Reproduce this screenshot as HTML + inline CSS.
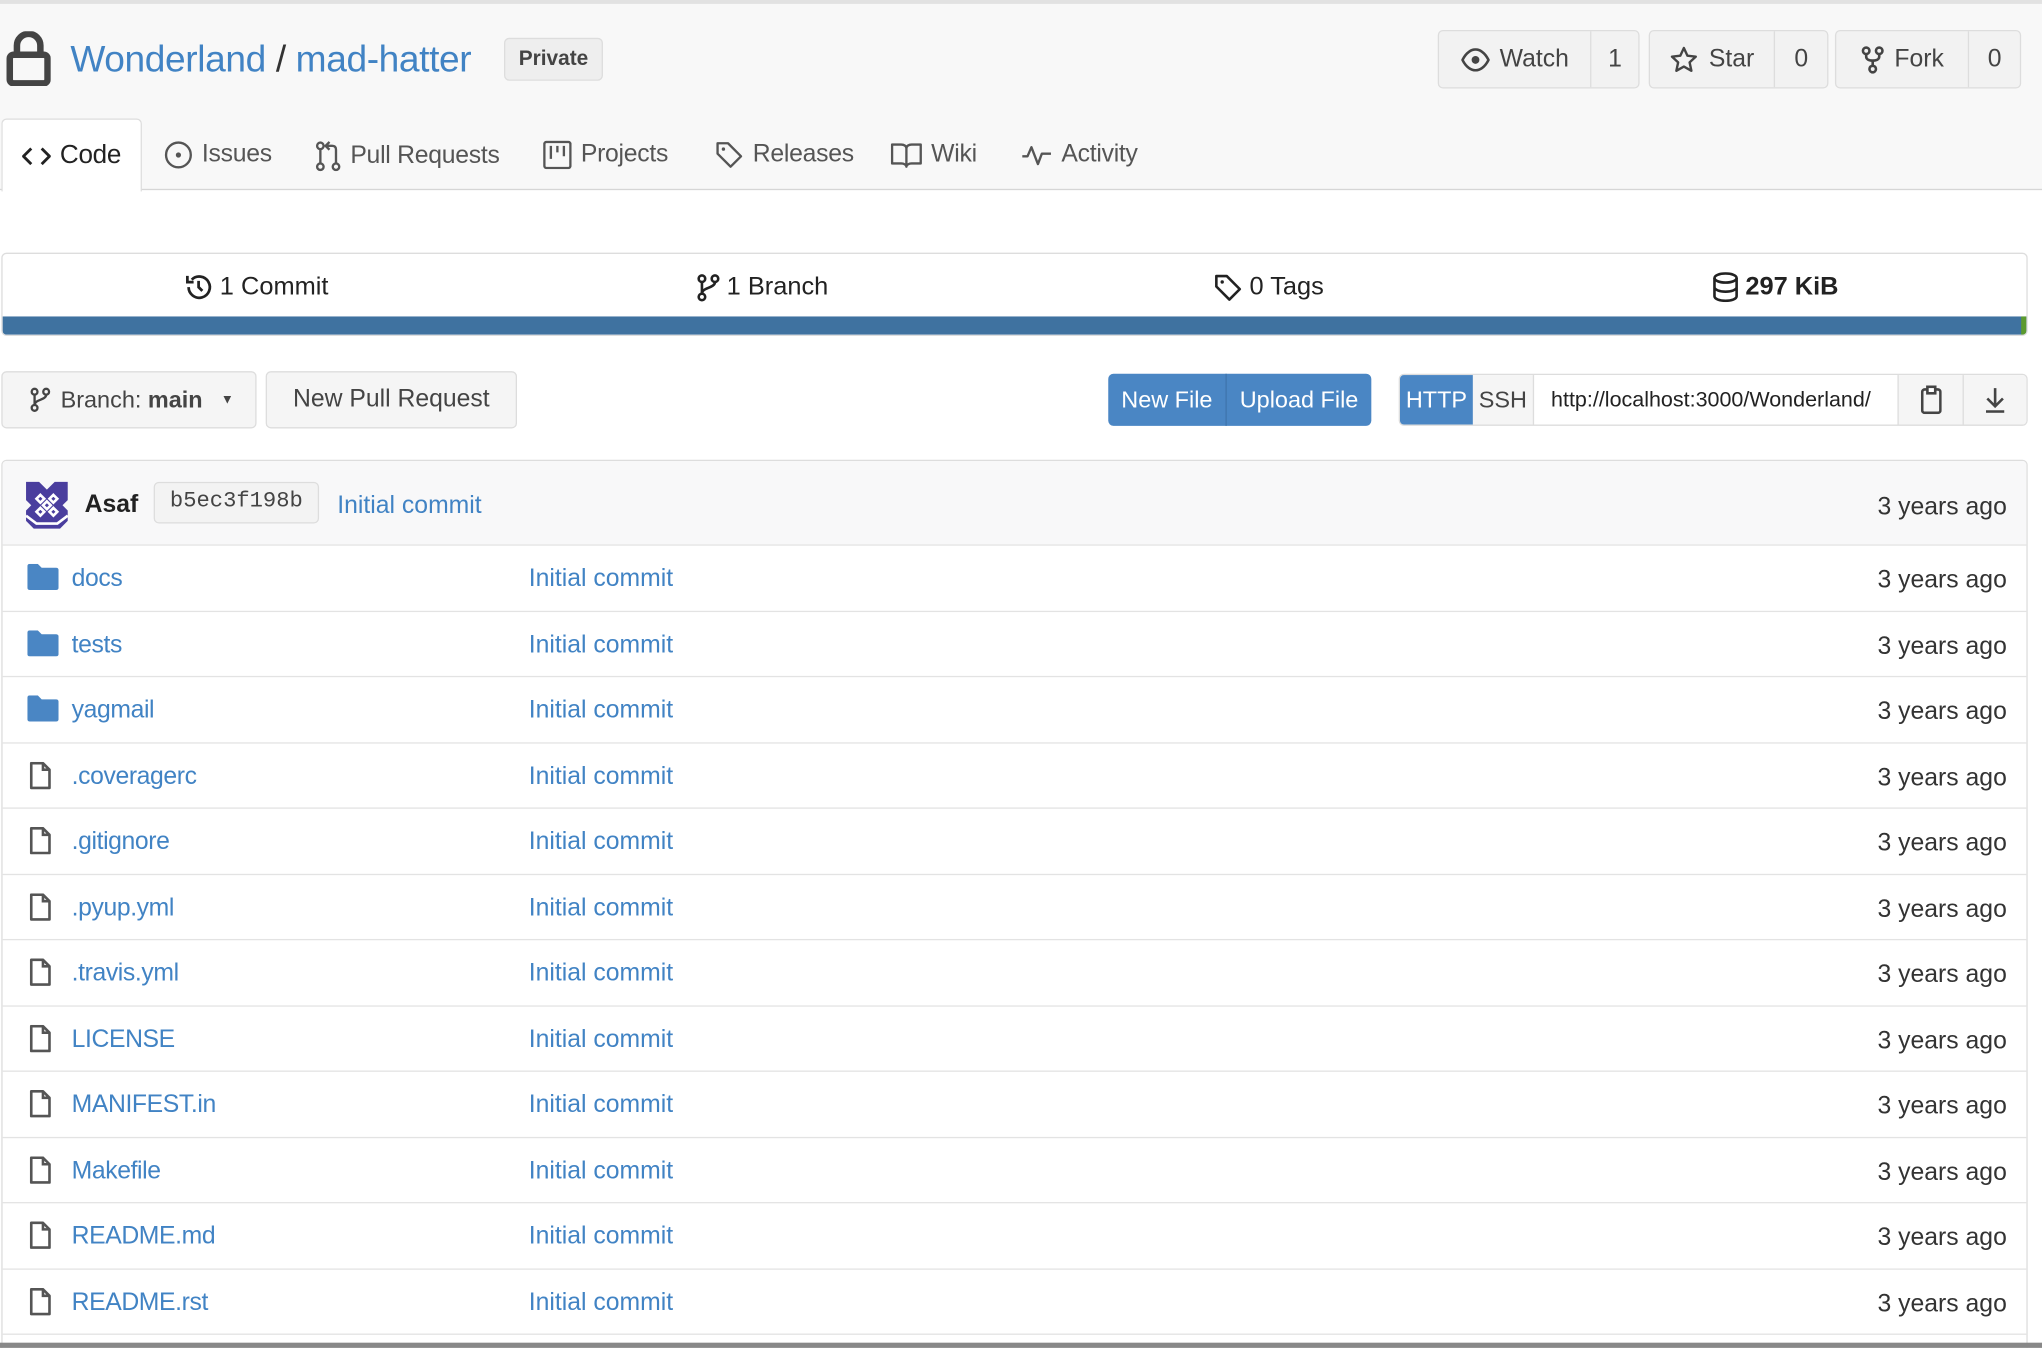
<!DOCTYPE html>
<html><head><meta charset="utf-8">
<style>
*{box-sizing:border-box;margin:0;padding:0}
html,body{width:2042px;height:1348px;overflow:hidden;background:#fff}
#w{width:1568px;height:1035px;transform:scale(1.30230);transform-origin:0 0;position:relative;font-family:"Liberation Sans",sans-serif;color:#333}
.abs{position:absolute}
.hdr{left:0;top:0;width:1568px;height:146px;background:#f8f8f8;border-top:3px solid #e2e2e2;border-bottom:1px solid #d6d6d6}
.title{left:54px;top:30px;font-size:28.5px;color:#4183c4;white-space:nowrap;letter-spacing:-0.3px}
.badge{left:387px;top:29px;width:76px;height:33px;border:1px solid #ddd;border-radius:4px;background:#eee;font-size:16px;font-weight:bold;color:#444;text-align:center;line-height:31px}
.btng{top:23px;height:45px;border:1px solid #ddd;border-radius:4px;background:#f2f2f2;display:flex;font-size:19px;color:#444}
.btng div{display:flex;align-items:center;justify-content:center}
.btng .c{border-left:1px solid #ddd}
.tab{top:108px;font-size:19px;color:#555;display:flex;align-items:center;gap:7px;white-space:nowrap;letter-spacing:-0.2px}
.code{left:1px;top:91px;width:108px;height:56px;background:#fff;border:1px solid #ddd;border-bottom:none;border-radius:4px 4px 0 0}
.stats{left:1px;top:194px;width:1556px;height:64px;border:1px solid #ddd;border-radius:4px;background:#fff;overflow:hidden}
.stats .it{position:absolute;top:14px;width:389px;text-align:center;font-size:19.5px;color:#222;display:flex;justify-content:center;align-items:center;gap:5px}
.bar{position:absolute;left:0;bottom:0;height:14px;width:100%;background:#3f72a0;border-right:4px solid #5b9a2e}
.btn{border:1px solid #ddd;border-radius:4px;background:#f5f5f5;font-size:19px;color:#444;display:flex;align-items:center;justify-content:center;white-space:nowrap}
.tbl{left:1px;top:353px;width:1556px;height:690px;border:1px solid #ddd;border-radius:4px;overflow:hidden}
.row{position:absolute;left:0;width:100%;height:51px;border-top:1px solid #e3e3e3;font-size:19px}
.row .ic{position:absolute;left:19px;top:14px}
.row .n{position:absolute;left:53px;top:15px;color:#4183c4;letter-spacing:-0.3px}
.row .m{position:absolute;left:404px;top:15px;color:#4183c4}
.row .t{position:absolute;right:15px;top:16px;color:#333}
</style></head><body><div id="w">
<div class="abs hdr"></div>
<svg class="abs" style="left:5px;top:24px" width="34" height="42" viewBox="0 0 34 42"><rect x="2.5" y="18" width="29" height="22" rx="3" fill="none" stroke="#444" stroke-width="5"/><path d="M8 19V11a9 9 0 0 1 18 0v8" fill="none" stroke="#444" stroke-width="5"/></svg>
<div class="abs title">Wonderland<span style="color:#333"> / </span>mad-hatter</div>
<div class="abs badge">Private</div>
<div class="abs btng" style="left:1104px;width:155px"><div style="width:117px;gap:8px"><svg width="22" height="18" viewBox="0 0 22 18"><path d="M1 9C4 3 8 1 11 1s7 2 10 8c-3 6-7 8-10 8S4 15 1 9z" fill="none" stroke="#444" stroke-width="2"/><circle cx="11" cy="9" r="3" fill="#444"/></svg>Watch</div><div class="c" style="width:37px">1</div></div>
<div class="abs btng" style="left:1266px;width:138px"><div style="width:96px;gap:8px"><svg width="22" height="22" viewBox="0 0 24 24"><path d="M12 2l3 6.5 7 .8-5.2 4.8 1.5 7L12 17.6 5.7 21.1l1.5-7L2 9.3l7-.8z" fill="none" stroke="#444" stroke-width="2" stroke-linejoin="round"/></svg>Star</div><div class="c" style="width:41px">0</div></div>
<div class="abs btng" style="left:1409px;width:143px"><div style="width:102px;gap:8px"><svg width="18" height="22" viewBox="0 0 18 22"><circle cx="4" cy="4" r="2.5" fill="none" stroke="#444" stroke-width="2"/><circle cx="14" cy="4" r="2.5" fill="none" stroke="#444" stroke-width="2"/><circle cx="9" cy="18" r="2.5" fill="none" stroke="#444" stroke-width="2"/><path d="M4 6.5v2c0 2 2 3 5 3s5-1 5-3v-2M9 11.5v4" fill="none" stroke="#444" stroke-width="2"/></svg>Fork</div><div class="c" style="width:40px">0</div></div>

<div class="abs code"></div>
<div class="abs tab" style="left:17px;color:#222"><svg width="22" height="16" viewBox="0 0 22 16"><path d="M7 2L1 8l6 6M15 2l6 6-6 6" fill="none" stroke="#222" stroke-width="2.2"/></svg><span style="font-size:20px">Code</span></div>
<div class="abs tab" style="left:126px"><svg width="22" height="22" viewBox="0 0 22 22"><circle cx="11" cy="11" r="9.5" fill="none" stroke="#555" stroke-width="1.8"/><circle cx="11" cy="11" r="2" fill="#555"/></svg>Issues</div>
<div class="abs tab" style="left:242px"><svg width="20" height="24" viewBox="0 0 20 24"><circle cx="4" cy="4" r="2.5" fill="none" stroke="#555" stroke-width="1.8"/><circle cx="4" cy="20" r="2.5" fill="none" stroke="#555" stroke-width="1.8"/><circle cx="16" cy="20" r="2.5" fill="none" stroke="#555" stroke-width="1.8"/><path d="M4 6.5v11M16 17.5V7c0-2-1-3-3-3H9m2-3L8 4l3 3" fill="none" stroke="#555" stroke-width="1.8"/></svg>Pull Requests</div>
<div class="abs tab" style="left:417px"><svg width="22" height="22" viewBox="0 0 22 22"><rect x="1" y="1" width="20" height="20" rx="1.5" fill="none" stroke="#555" stroke-width="1.8"/><path d="M6 4v10M11 4v5M16 4v8" stroke="#555" stroke-width="1.8"/></svg>Projects</div>
<div class="abs tab" style="left:549px"><svg width="22" height="22" viewBox="0 0 22 22"><path d="M2 2h8l10 10-8 8L2 10z" fill="none" stroke="#555" stroke-width="1.8" stroke-linejoin="round"/><circle cx="6.5" cy="6.5" r="1.3" fill="#555"/></svg>Releases</div>
<div class="abs tab" style="left:684px"><svg width="24" height="20" viewBox="0 0 24 20"><path d="M1 2h7c2 0 4 1 4 3v14c0-1.5-2-2.5-4-2.5H1zM23 2h-7c-2 0-4 1-4 3v14c0-1.5 2-2.5 4-2.5h7z" fill="none" stroke="#555" stroke-width="1.8" stroke-linejoin="round"/></svg>Wiki</div>
<div class="abs tab" style="left:784px"><svg width="24" height="20" viewBox="0 0 24 20"><path d="M1 11h4l3-7 5 13 3-8h7" fill="none" stroke="#555" stroke-width="1.8" stroke-linejoin="round"/></svg>Activity</div>

<div class="abs stats">
<div class="it" style="left:0"><svg width="23" height="23" viewBox="0 0 24 24"><path d="M4 12a8.5 8.5 0 1 0 2.5-6" fill="none" stroke="#222" stroke-width="2.2"/><path d="M3 3v5h5" fill="none" stroke="#222" stroke-width="2.2"/><path d="M12 7v5l3 3" fill="none" stroke="#222" stroke-width="2.2"/></svg>1 Commit</div>
<div class="it" style="left:389px"><svg width="18" height="22" viewBox="0 0 18 22"><circle cx="4" cy="4" r="2.5" fill="none" stroke="#222" stroke-width="2"/><circle cx="14" cy="4" r="2.5" fill="none" stroke="#222" stroke-width="2"/><circle cx="4" cy="18" r="2.5" fill="none" stroke="#222" stroke-width="2"/><path d="M4 6.5v9M14 6.5c0 5-10 4-10 9" fill="none" stroke="#222" stroke-width="2"/></svg>1 Branch</div>
<div class="it" style="left:778px"><svg width="22" height="22" viewBox="0 0 22 22"><path d="M2 2h8l10 10-8 8L2 10z" fill="none" stroke="#222" stroke-width="2" stroke-linejoin="round"/><circle cx="6.5" cy="6.5" r="1.3" fill="#222"/></svg>0 Tags</div>
<div class="it" style="left:1167px;font-weight:bold"><svg width="20" height="23" viewBox="0 0 20 23"><ellipse cx="10" cy="4.5" rx="8.5" ry="3.5" fill="none" stroke="#222" stroke-width="2"/><path d="M1.5 4.5v14c0 2 4 3.5 8.5 3.5s8.5-1.5 8.5-3.5v-14M1.5 11.5c0 2 4 3.5 8.5 3.5s8.5-1.5 8.5-3.5" fill="none" stroke="#222" stroke-width="2"/></svg>297 KiB</div>
<div class="bar"></div>
</div>

<div class="abs btn" style="left:1px;top:285px;width:196px;height:44px;gap:8px;font-size:18px;padding-left:4px"><svg width="16" height="22" viewBox="0 0 18 22"><circle cx="4" cy="4" r="2.5" fill="none" stroke="#444" stroke-width="2"/><circle cx="14" cy="4" r="2.5" fill="none" stroke="#444" stroke-width="2"/><circle cx="4" cy="18" r="2.5" fill="none" stroke="#444" stroke-width="2"/><path d="M4 6.5v9M14 6.5c0 5-10 4-10 9" fill="none" stroke="#444" stroke-width="2"/></svg><span>Branch: <b>main</b></span><span style="font-size:10px;margin-left:6px">▼</span></div>
<div class="abs btn" style="left:204px;top:285px;width:193px;height:44px">New Pull Request</div>
<div class="abs" style="left:851px;top:287px;width:202px;height:40px;background:#4a86c4;border-radius:4px;display:flex;color:#fff;font-size:18px"><div style="width:91px;display:flex;align-items:center;justify-content:center;border-right:1px solid #3f75ad">New File</div><div style="flex:1;display:flex;align-items:center;justify-content:center">Upload File</div></div>
<div class="abs" style="left:1074px;top:287px;width:483px;height:40px;border:1px solid #ddd;border-radius:4px;display:flex;font-size:18px;overflow:hidden">
<div style="width:56px;background:#4a86c4;color:#fff;display:flex;align-items:center;justify-content:center">HTTP</div>
<div style="width:47px;background:#f5f5f5;color:#444;display:flex;align-items:center;justify-content:center;border-right:1px solid #ddd">SSH</div>
<div style="width:279px;color:#222;display:flex;align-items:center;padding-left:13px;font-size:16.5px;white-space:nowrap;overflow:hidden">http://localhost:3000/Wonderland/</div>
<div style="width:50px;background:#f5f5f5;border-left:1px solid #ddd;display:flex;align-items:center;justify-content:center"><svg width="16" height="22" viewBox="0 0 16 22"><rect x="1" y="3" width="14" height="18" rx="2" fill="none" stroke="#444" stroke-width="2"/><rect x="5" y="1" width="6" height="5" fill="#fff" stroke="#444" stroke-width="2"/></svg></div>
<div style="flex:1;background:#f5f5f5;border-left:1px solid #ddd;display:flex;align-items:center;justify-content:center"><svg width="16" height="20" viewBox="0 0 16 20"><path d="M8 1v13M2 9l6 6 6-6M1 19h14" fill="none" stroke="#444" stroke-width="2"/></svg></div>
</div>

<div class="abs tbl">
<div style="position:absolute;left:0;top:0;width:100%;height:64px;background:#f8f8f9"></div>
<svg style="position:absolute;left:14px;top:12px" width="40" height="40" viewBox="0 0 40 40"><path d="M4 4h10l6 6 6-6h10v14l-4 4 4 4v8l-6 6H10l-6-6v-8l4-4-4-4z" fill="#4a3e9e"/><g fill="none" stroke="#fff" stroke-width="2"><path d="M15 14l3 3-3 3-3-3zM25 14l3 3-3 3-3-3zM20 19l3 3-3 3-3-3zM15 24l3 3-3 3-3-3zM25 24l3 3-3 3-3-3z"/></g><path d="M4 30l8 6h16l8-6" fill="none" stroke="#fff" stroke-width="2"/></svg>
<div style="position:absolute;left:63px;top:23px;font-size:19px;font-weight:bold;color:#222">Asaf</div>
<div style="position:absolute;left:116px;top:16px;width:127px;height:32px;border:1px solid #ddd;border-radius:4px;background:#f3f3f3;font-family:'Liberation Mono',monospace;font-size:17px;color:#444;text-align:center;line-height:30px">b5ec3f198b</div>
<div style="position:absolute;left:257px;top:24px;font-size:19px;color:#4183c4">Initial commit</div>
<div style="position:absolute;right:15px;top:25px;font-size:19px;color:#333">3 years ago</div>

<div class="row" style="top:64px"><svg class="ic" width="24" height="20" viewBox="0 0 24 20"><path d="M0 2q0-2 2-2h6l3 3h11q2 0 2 2v13q0 2-2 2H2q-2 0-2-2z" fill="#4a86c4"/></svg><span class="n">docs</span><span class="m">Initial commit</span><span class="t">3 years ago</span></div>
<div class="row" style="top:114.5px"><svg class="ic" width="24" height="20" viewBox="0 0 24 20"><path d="M0 2q0-2 2-2h6l3 3h11q2 0 2 2v13q0 2-2 2H2q-2 0-2-2z" fill="#4a86c4"/></svg><span class="n">tests</span><span class="m">Initial commit</span><span class="t">3 years ago</span></div>
<div class="row" style="top:165px"><svg class="ic" width="24" height="20" viewBox="0 0 24 20"><path d="M0 2q0-2 2-2h6l3 3h11q2 0 2 2v13q0 2-2 2H2q-2 0-2-2z" fill="#4a86c4"/></svg><span class="n">yagmail</span><span class="m">Initial commit</span><span class="t">3 years ago</span></div>
<div class="row" style="top:215.5px"><svg class="ic" width="20" height="22" viewBox="0 0 20 22"><path d="M3 1h9l5 5v14H3z" fill="none" stroke="#555" stroke-width="2" stroke-linejoin="round"/><path d="M12 1v5h5" fill="none" stroke="#555" stroke-width="2"/></svg><span class="n">.coveragerc</span><span class="m">Initial commit</span><span class="t">3 years ago</span></div>
<div class="row" style="top:266px"><svg class="ic" width="20" height="22" viewBox="0 0 20 22"><path d="M3 1h9l5 5v14H3z" fill="none" stroke="#555" stroke-width="2" stroke-linejoin="round"/><path d="M12 1v5h5" fill="none" stroke="#555" stroke-width="2"/></svg><span class="n">.gitignore</span><span class="m">Initial commit</span><span class="t">3 years ago</span></div>
<div class="row" style="top:316.5px"><svg class="ic" width="20" height="22" viewBox="0 0 20 22"><path d="M3 1h9l5 5v14H3z" fill="none" stroke="#555" stroke-width="2" stroke-linejoin="round"/><path d="M12 1v5h5" fill="none" stroke="#555" stroke-width="2"/></svg><span class="n">.pyup.yml</span><span class="m">Initial commit</span><span class="t">3 years ago</span></div>
<div class="row" style="top:367px"><svg class="ic" width="20" height="22" viewBox="0 0 20 22"><path d="M3 1h9l5 5v14H3z" fill="none" stroke="#555" stroke-width="2" stroke-linejoin="round"/><path d="M12 1v5h5" fill="none" stroke="#555" stroke-width="2"/></svg><span class="n">.travis.yml</span><span class="m">Initial commit</span><span class="t">3 years ago</span></div>
<div class="row" style="top:417.5px"><svg class="ic" width="20" height="22" viewBox="0 0 20 22"><path d="M3 1h9l5 5v14H3z" fill="none" stroke="#555" stroke-width="2" stroke-linejoin="round"/><path d="M12 1v5h5" fill="none" stroke="#555" stroke-width="2"/></svg><span class="n">LICENSE</span><span class="m">Initial commit</span><span class="t">3 years ago</span></div>
<div class="row" style="top:468px"><svg class="ic" width="20" height="22" viewBox="0 0 20 22"><path d="M3 1h9l5 5v14H3z" fill="none" stroke="#555" stroke-width="2" stroke-linejoin="round"/><path d="M12 1v5h5" fill="none" stroke="#555" stroke-width="2"/></svg><span class="n">MANIFEST.in</span><span class="m">Initial commit</span><span class="t">3 years ago</span></div>
<div class="row" style="top:518.5px"><svg class="ic" width="20" height="22" viewBox="0 0 20 22"><path d="M3 1h9l5 5v14H3z" fill="none" stroke="#555" stroke-width="2" stroke-linejoin="round"/><path d="M12 1v5h5" fill="none" stroke="#555" stroke-width="2"/></svg><span class="n">Makefile</span><span class="m">Initial commit</span><span class="t">3 years ago</span></div>
<div class="row" style="top:569px"><svg class="ic" width="20" height="22" viewBox="0 0 20 22"><path d="M3 1h9l5 5v14H3z" fill="none" stroke="#555" stroke-width="2" stroke-linejoin="round"/><path d="M12 1v5h5" fill="none" stroke="#555" stroke-width="2"/></svg><span class="n">README.md</span><span class="m">Initial commit</span><span class="t">3 years ago</span></div>
<div class="row" style="top:619.5px"><svg class="ic" width="20" height="22" viewBox="0 0 20 22"><path d="M3 1h9l5 5v14H3z" fill="none" stroke="#555" stroke-width="2" stroke-linejoin="round"/><path d="M12 1v5h5" fill="none" stroke="#555" stroke-width="2"/></svg><span class="n">README.rst</span><span class="m">Initial commit</span><span class="t">3 years ago</span></div>
<div class="row" style="top:670px"></div>
</div>
<div class="abs" style="left:0;top:1031px;width:1568px;height:4px;background:#888"></div>
</div></body></html>
